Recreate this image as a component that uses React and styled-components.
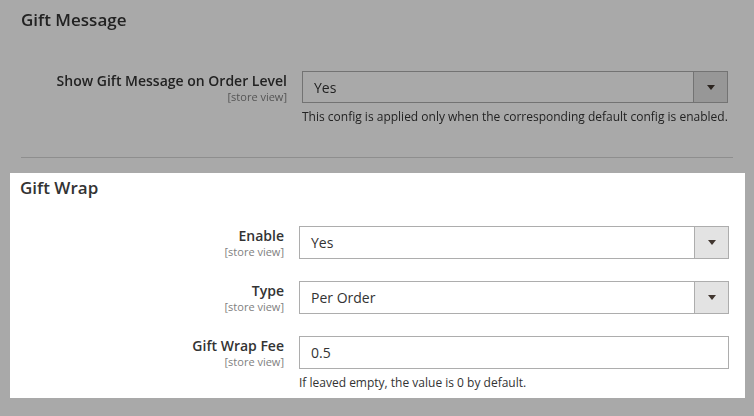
import React from "react";
import styled, { createGlobalStyle } from "styled-components";

const GlobalStyle = createGlobalStyle`
  html, body {
    margin: 0;
    padding: 0;
    background: #a9a9a9;
  }

  body {
    font-family: "Open Sans", "Liberation Sans", Arial, sans-serif;
    color: #303030;
  }
`;

const ArrowIcon = () => (
  <svg width="8" height="5" viewBox="0 0 8 5">
    <path d="M0 0 H8 L4 5 Z" fill="#41362f" />
  </svg>
);

const Field = ({ type, value, note, height }) => (
  <FieldWrap>
    {type === "select" ? (
      <Select $height={height}>
        <SelectValue>{value}</SelectValue>
        <ArrowBox>
          <ArrowIcon />
        </ArrowBox>
      </Select>
    ) : (
      <Input $height={height}>{value}</Input>
    )}
    {note && <Note>{note}</Note>}
  </FieldWrap>
);

const ConfigRow = ({ label, labelWidth, fieldWidth, ...field }) => (
  <Row $labelWidth={labelWidth} $fieldWidth={fieldWidth}>
    <Label>
      <LabelText>{label}</LabelText>
      <Scope>[store view]</Scope>
    </Label>
    <Field {...field} />
  </Row>
);

const App = () => {
  return (
    <>
      <GlobalStyle />
      <Page>
        <DimSection>
          <Title>Gift Message</Title>
          <Rows $top={41}>
            <ConfigRow
              label="Show Gift Message on Order Level"
              labelWidth={266}
              fieldWidth={426}
              height={32}
              type="select"
              value="Yes"
              note="This config is applied only when the corresponding default config is enabled."
            />
          </Rows>
          <Divider />
        </DimSection>

        <Panel>
          <Title>Gift Wrap</Title>
          <Rows $top={28}>
            <ConfigRow
              label="Enable"
              labelWidth={264}
              fieldWidth={430}
              height={33}
              type="select"
              value="Yes"
            />
            <ConfigRow
              label="Type"
              labelWidth={264}
              fieldWidth={430}
              height={33}
              type="select"
              value="Per Order"
            />
            <ConfigRow
              label="Gift Wrap Fee"
              labelWidth={264}
              fieldWidth={430}
              height={33}
              type="input"
              value="0.5"
              note="If leaved empty, the value is 0 by default."
            />
          </Rows>
        </Panel>
      </Page>
    </>
  );
};

const Page = styled.div`
  min-height: 416px;
  background: #a9a9a9;
  overflow: hidden;
`;

const DimSection = styled.section`
  padding: 10px 21px 15px;
  background: #ffffff;
  filter: brightness(0.663);
`;

const Panel = styled.section`
  margin: 0 9px 0 10px;
  padding: 5px 16px 6px 10px;
  background: #ffffff;
`;

const Title = styled.h2`
  margin: 0;
  font-size: 17px;
  font-weight: 600;
  line-height: 20px;
  color: #333333;
`;

const Rows = styled.div`
  display: flex;
  flex-direction: column;
  gap: 22px;
  margin-top: ${({ $top }) => $top}px;
`;

const Row = styled.div`
  display: grid;
  grid-template-columns: ${({ $labelWidth, $fieldWidth }) =>
    `${$labelWidth}px ${$fieldWidth}px`};
  column-gap: 15px;
`;

const Label = styled.div`
  display: flex;
  flex-direction: column;
  align-items: flex-end;
  padding-top: 1px;
  text-align: right;
`;

const LabelText = styled.span`
  font-size: 14px;
  font-weight: 600;
  line-height: 18px;
  color: #333333;
`;

const Scope = styled.span`
  font-size: 11px;
  line-height: 14px;
  color: #808080;
`;

const FieldWrap = styled.div`
  display: flex;
  flex-direction: column;
`;

const Select = styled.div`
  display: flex;
  height: ${({ $height }) => $height}px;
  box-sizing: border-box;
  border: 1px solid #adadad;
  background: #ffffff;
`;

const SelectValue = styled.span`
  flex: 1;
  display: flex;
  align-items: center;
  padding: 0 11px;
  font-size: 14px;
  color: #333333;
`;

const ArrowBox = styled.span`
  width: 33px;
  display: flex;
  align-items: center;
  justify-content: center;
  border-left: 1px solid #adadad;
  background: #e3e3e3;
`;

const Input = styled.div`
  height: ${({ $height }) => $height}px;
  box-sizing: border-box;
  display: flex;
  align-items: center;
  padding: 0 11px;
  border: 1px solid #adadad;
  font-size: 14px;
  color: #333333;
  background: #ffffff;
`;

const Note = styled.div`
  margin-top: 5px;
  font-size: 12px;
  line-height: 18px;
  color: #333333;
  white-space: nowrap;
`;

const Divider = styled.hr`
  margin: 31px 0 0;
  border: 0;
  border-top: 1px solid #d6d6d6;
`;

export default App;
